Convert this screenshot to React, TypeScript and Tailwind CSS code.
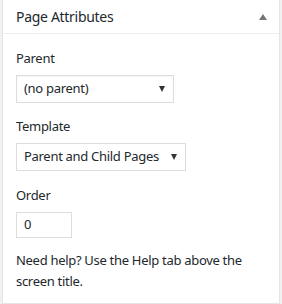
import React from 'react';

export default function App() {
    return (
        <div className="w-[282px] h-[304px] bg-[#f1f1f1] overflow-hidden" style={{ fontFamily: '"Noto Sans", "Open Sans", sans-serif' }}>
            <div className="ml-[2px] w-[278px] h-[304px] bg-white border-x border-b border-[#e5e5e5] text-[13px] tracking-[-0.3px] text-[#23282d]">
                {/* Header */}
                <div className="h-[34px] border-b border-[#eeeeee] flex items-center justify-between pl-[13px] pr-[12px]">
                    <h2 className="text-[14px] leading-none">Page Attributes</h2>
                    <span className="w-0 h-0 border-x-[4px] border-x-transparent border-b-[6px] border-b-[#72777c]"></span>
                </div>

                {/* Body */}
                <div className="px-[13px] pt-[15px]">
                    <p className="leading-[18px] mb-[8px]">Parent</p>
                    <div className="w-[158px] h-[28px] border border-[#dddddd] flex items-center justify-between pl-[7px] pr-[8px] shadow-[inset_0_1px_2px_rgba(0,0,0,0.04)]">
                        <span>(no parent)</span>
                        <span className="w-0 h-0 border-x-[3px] border-x-transparent border-t-[6px] border-t-[#333]"></span>
                    </div>

                    <p className="leading-[18px] mt-[14px] mb-[8px]">Template</p>
                    <div className="w-[170px] h-[28px] border border-[#dddddd] flex items-center justify-between pl-[7px] pr-[8px]">
                        <span>Parent and Child Pages</span>
                        <span className="w-0 h-0 border-x-[3px] border-x-transparent border-t-[6px] border-t-[#333]"></span>
                    </div>

                    <p className="leading-[18px] mt-[15px] mb-[8px]">Order</p>
                    <div className="w-[56px] h-[26px] border border-[#dddddd] flex items-center pl-[7px]">
                        <span>0</span>
                    </div>

                    <p className="leading-[21px] mt-[12px]">Need help? Use the Help tab above the screen title.</p>
                </div>
            </div>
        </div>
    );
}
